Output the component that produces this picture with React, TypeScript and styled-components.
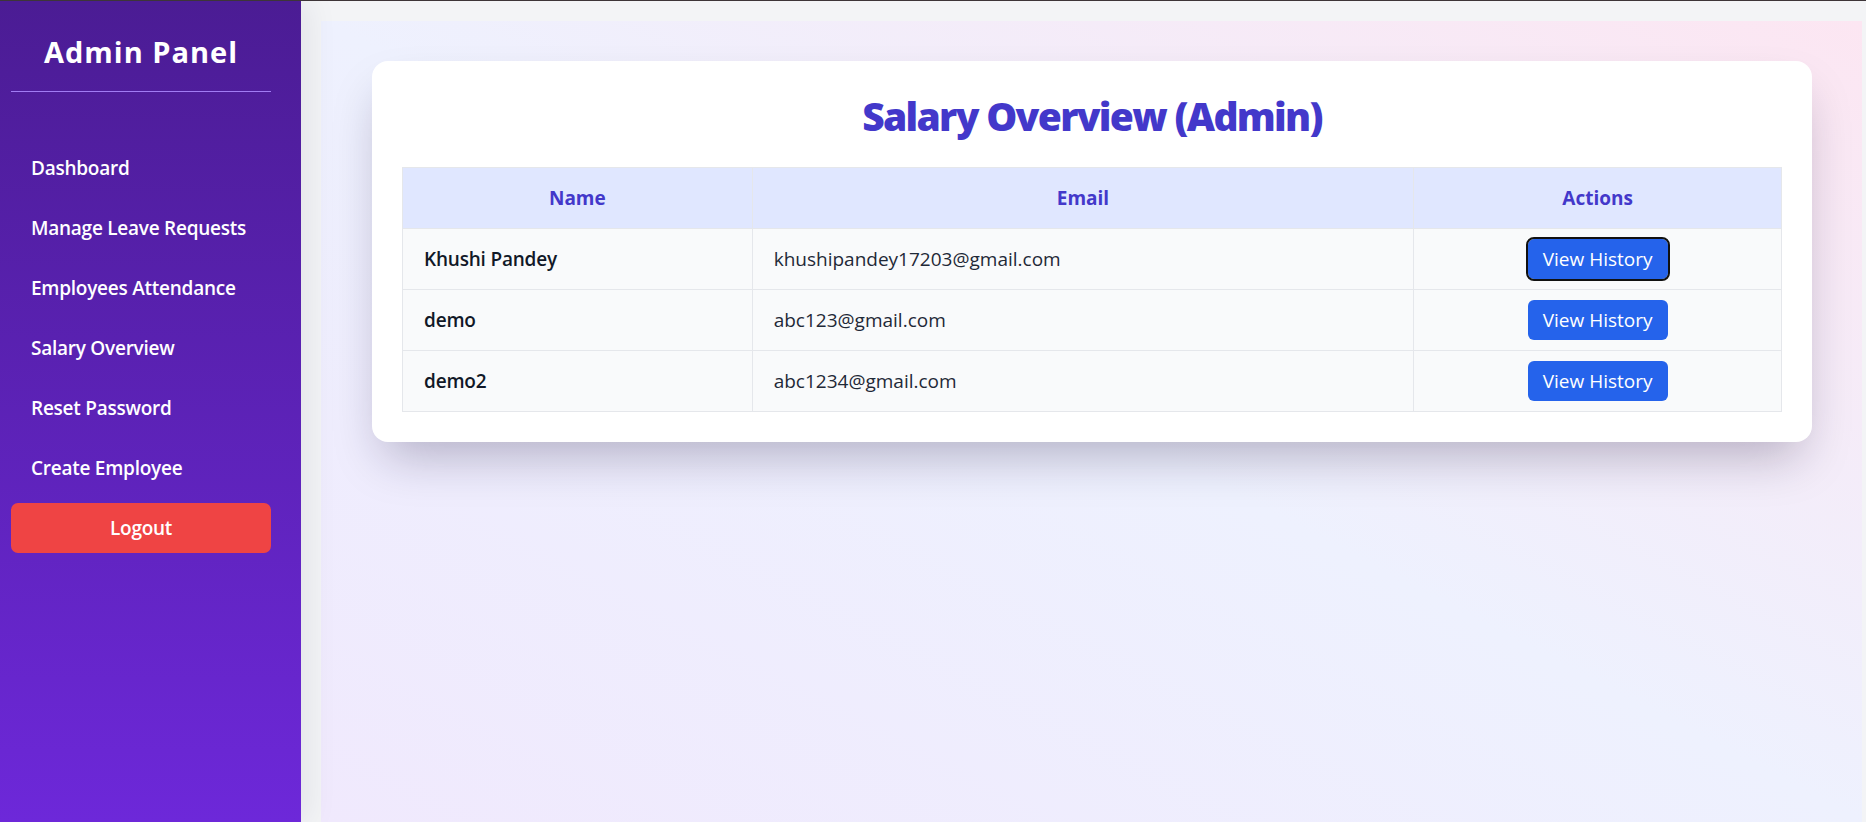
import React from "react";
import styled, { createGlobalStyle, css } from "styled-components";

const GlobalStyle = createGlobalStyle`
  * { box-sizing: border-box; }
  html, body { margin: 0; padding: 0; height: 100%; }
  body {
    font-family: "Open Sans", "Noto Sans", "Liberation Sans", sans-serif;
    background: #f3f4f6;
    overflow: hidden;
  }
`;

const Shell = styled.div`
  display: flex;
  height: 100vh;
  border-top: 1px solid #3d3538;
  overflow: hidden;
`;

const Sidebar = styled.aside`
  position: relative;
  z-index: 1;
  width: 301px;
  flex-shrink: 0;
  display: flex;
  flex-direction: column;
  padding: 31px 30px 0 11px;
  background: linear-gradient(to bottom, #4b1c94, #6d28d9);
  color: #ffffff;
  box-shadow: 6px 0 30px rgba(30, 20, 60, 0.08);
`;

const Brand = styled.h1`
  margin: 0;
  padding-bottom: 19px;
  border-bottom: 1px solid #a17cf4;
  font-size: 29px;
  line-height: 40px;
  font-weight: 700;
  letter-spacing: 1px;
  text-align: center;
`;

const Nav = styled.nav`
  display: flex;
  flex-direction: column;
  margin-top: 46px;
`;

const NavLink = styled.a`
  display: block;
  padding: 16px 20px;
  font-size: 19px;
  line-height: 28px;
  font-weight: 600;
  letter-spacing: -0.25px;
  white-space: nowrap;
  color: #ffffff;
  text-decoration: none;
`;

const LogoutButton = styled.button`
  margin-top: 5px;
  height: 50px;
  width: 100%;
  border: none;
  border-radius: 7px;
  background: #ef4444;
  color: #ffffff;
  font-family: inherit;
  font-size: 19px;
  font-weight: 600;
  letter-spacing: -0.3px;
`;

const Main = styled.main`
  flex: 1;
  display: flex;
  padding: 20px 4px 0 20px;
  background: #f3f4f6;
`;

const Backdrop = styled.div`
  flex: 1;
  padding: 40px 50px 0 51px;
  background: linear-gradient(to top right, #f0e9fd 0%, #eef1fe 50%, #fce6f2 100%);
`;

const Card = styled.section`
  background: #ffffff;
  border-radius: 16px;
  padding: 30px;
  box-shadow: 0 25px 50px -12px rgba(20, 10, 50, 0.28);
`;

const Title = styled.h2`
  margin: -3px 0 23px;
  text-align: center;
  font-size: 39px;
  line-height: 56px;
  font-weight: 800;
  color: #4338ca;
  letter-spacing: -1.7px;
`;

const Table = styled.table`
  width: 100%;
  border-collapse: collapse;
  font-size: 19px;
`;

const Col = styled.col<{ $w: number }>`
  width: ${(p) => p.$w}px;
`;

const HeadCell = styled.th`
  background: #e0e7ff;
  color: #4338ca;
  font-weight: 700;
  line-height: 28px;
  padding: 16px 21px;
  border: 1px solid #e5e7eb;
  text-align: center;
`;

const Cell = styled.td<{ $strong?: boolean; $center?: boolean }>`
  background: #f9fafb;
  border: 1px solid #e5e7eb;
  padding: 10px 21px;
  line-height: 28px;
  color: ${(p) => (p.$strong ? "#111827" : "#1f2937")};
  font-weight: ${(p) => (p.$strong ? 600 : 400)};
  letter-spacing: ${(p) => (p.$strong ? "-0.2px" : "0")};
  text-align: ${(p) => (p.$center ? "center" : "left")};
`;

const HistoryButton = styled.button<{ $focused?: boolean }>`
  height: 40px;
  padding: 0 15px;
  border: none;
  border-radius: 6px;
  background: #2563eb;
  color: #ffffff;
  font-family: inherit;
  font-size: 19px;
  vertical-align: middle;
  ${(p) =>
    p.$focused &&
    css`
      outline: 2px solid #111111;
      outline-offset: 0px;
    `}
`;

const navItems = [
  "Dashboard",
  "Manage Leave Requests",
  "Employees Attendance",
  "Salary Overview",
  "Reset Password",
  "Create Employee",
];

const employees = [
  { name: "Khushi Pandey", email: "khushipandey17203@gmail.com" },
  { name: "demo", email: "abc123@gmail.com" },
  { name: "demo2", email: "abc1234@gmail.com" },
];

export default function App() {
  return (
    <>
      <GlobalStyle />
      <Shell>
        <Sidebar>
          <Brand>Admin Panel</Brand>
          <Nav>
            {navItems.map((item) => (
              <NavLink key={item} href="#">
                {item}
              </NavLink>
            ))}
            <LogoutButton>Logout</LogoutButton>
          </Nav>
        </Sidebar>
        <Main>
          <Backdrop>
            <Card>
              <Title>Salary Overview (Admin)</Title>
              <Table>
                <colgroup>
                  <Col $w={350} />
                  <Col $w={662} />
                  <Col $w={368} />
                </colgroup>
                <thead>
                  <tr>
                    <HeadCell>Name</HeadCell>
                    <HeadCell>Email</HeadCell>
                    <HeadCell>Actions</HeadCell>
                  </tr>
                </thead>
                <tbody>
                  {employees.map((e, i) => (
                    <tr key={e.email}>
                      <Cell $strong>{e.name}</Cell>
                      <Cell>{e.email}</Cell>
                      <Cell $center>
                        <HistoryButton $focused={i === 0}>View History</HistoryButton>
                      </Cell>
                    </tr>
                  ))}
                </tbody>
              </Table>
            </Card>
          </Backdrop>
        </Main>
      </Shell>
    </>
  );
}
